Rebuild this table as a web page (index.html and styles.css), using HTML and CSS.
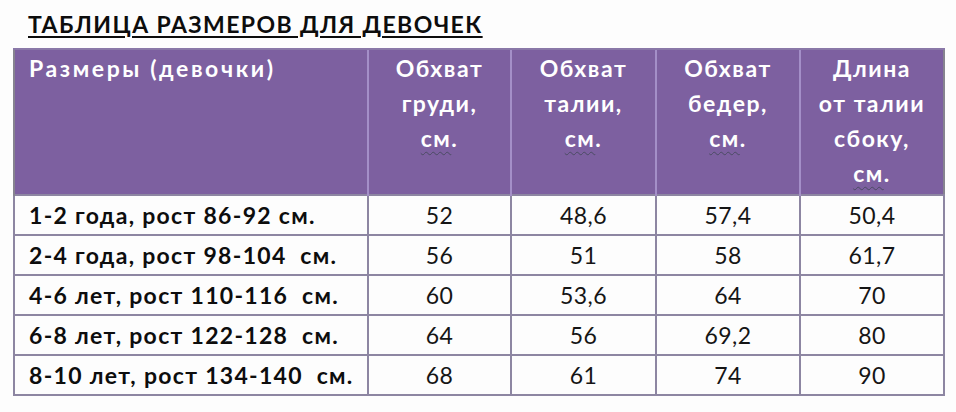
FILE: index.html
```html
<!DOCTYPE html>
<html lang="ru">
<head>
<meta charset="utf-8">
<title>Таблица размеров для девочек</title>
<link rel="stylesheet" href="styles.css">
</head>
<body>
<div class="page">
  <h1 class="title">ТАБЛИЦА РАЗМЕРОВ ДЛЯ ДЕВОЧЕК</h1>
  <table class="sizes">
    <colgroup>
      <col class="c-name"><col class="c-v1"><col class="c-v2"><col class="c-v3"><col class="c-v4">
    </colgroup>
    <thead>
      <tr>
        <th class="h-name">Размеры (девочки)</th>
        <th>Обхват<br>груди,<br><span class="cm">см</span>.</th>
        <th>Обхват<br>талии,<br><span class="cm">см</span>.</th>
        <th>Обхват<br>бедер,<br><span class="cm">см</span>.</th>
        <th>Длина<br>от талии<br>сбоку,<br><span class="cm">см</span>.</th>
      </tr>
    </thead>
    <tbody>
      <tr><td class="name">1-2 года, рост 86-92 см.</td><td>52</td><td>48,6</td><td>57,4</td><td>50,4</td></tr>
      <tr><td class="name">2-4 года, рост 98-104&nbsp; см.</td><td>56</td><td>51</td><td>58</td><td>61,7</td></tr>
      <tr><td class="name">4-6 лет, рост 110-116&nbsp; см.</td><td>60</td><td>53,6</td><td>64</td><td>70</td></tr>
      <tr><td class="name">6-8 лет, рост 122-128&nbsp; см.</td><td>64</td><td>56</td><td>69,2</td><td>80</td></tr>
      <tr><td class="name">8-10 лет, рост 134-140&nbsp; см.</td><td>68</td><td>61</td><td>74</td><td>90</td></tr>
    </tbody>
  </table>
</div>
</body>
</html>
```
FILE: styles.css
```css
html, body {
  margin: 0;
  padding: 0;
  background: #fdfdfd;
}
.page {
  width: 956px;
  height: 412px;
  padding: 0 0 0 13px;
  box-sizing: border-box;
  font-family: Lato, "Open Sans", "Liberation Sans", sans-serif;
  color: #111;
}
.title {
  margin: 0 0 0 15px;
  padding-top: 9px;
  height: 48px;
  box-sizing: border-box;
  font-size: 23px;
  line-height: 30px;
  font-weight: 700;
  letter-spacing: 1.4px;
  text-decoration: underline;
  text-decoration-thickness: 2px;
  text-underline-offset: 3px;
  color: #0d0d0d;
}
.sizes {
  border-collapse: collapse;
  width: 930px;
  table-layout: fixed;
  border: 2px solid #86838f;
}
.c-name { width: 354px; }
.c-v1 { width: 143px; }
.c-v2 { width: 145px; }
.c-v3 { width: 144px; }
.c-v4 { width: 144px; }
.sizes th {
  background: #7d60a0;
  color: #fff;
  font-weight: 700;
  font-size: 23px;
  line-height: 35px;
  letter-spacing: 1.5px;
  height: 146px;
  vertical-align: top;
  text-align: center;
  padding: 1px 0 0;
  border-left: 2px solid #a48fc8;
  border-top: 2px solid #8a78a8;
  box-sizing: border-box;
}
.sizes th.h-name {
  text-align: left;
  padding-left: 14px;
  letter-spacing: 2.6px;
  border-left: 2px solid #86838f;
}
.cm {
  text-decoration: underline wavy #4a4a62;
  text-decoration-thickness: 1px;
  text-underline-offset: 4px;
}
.sizes td {
  height: 40px;
  padding: 0;
  font-size: 23px;
  letter-spacing: 0.5px;
  text-align: center;
  vertical-align: middle;
  border: 2px solid #8d86a2;
  box-sizing: border-box;
  background: #fdfdfd;
  color: #151515;
}
.sizes td.name {
  text-align: left;
  padding-left: 14px;
  font-weight: 700;
  letter-spacing: 1.3px;
  color: #0d0d0d;
}
```
